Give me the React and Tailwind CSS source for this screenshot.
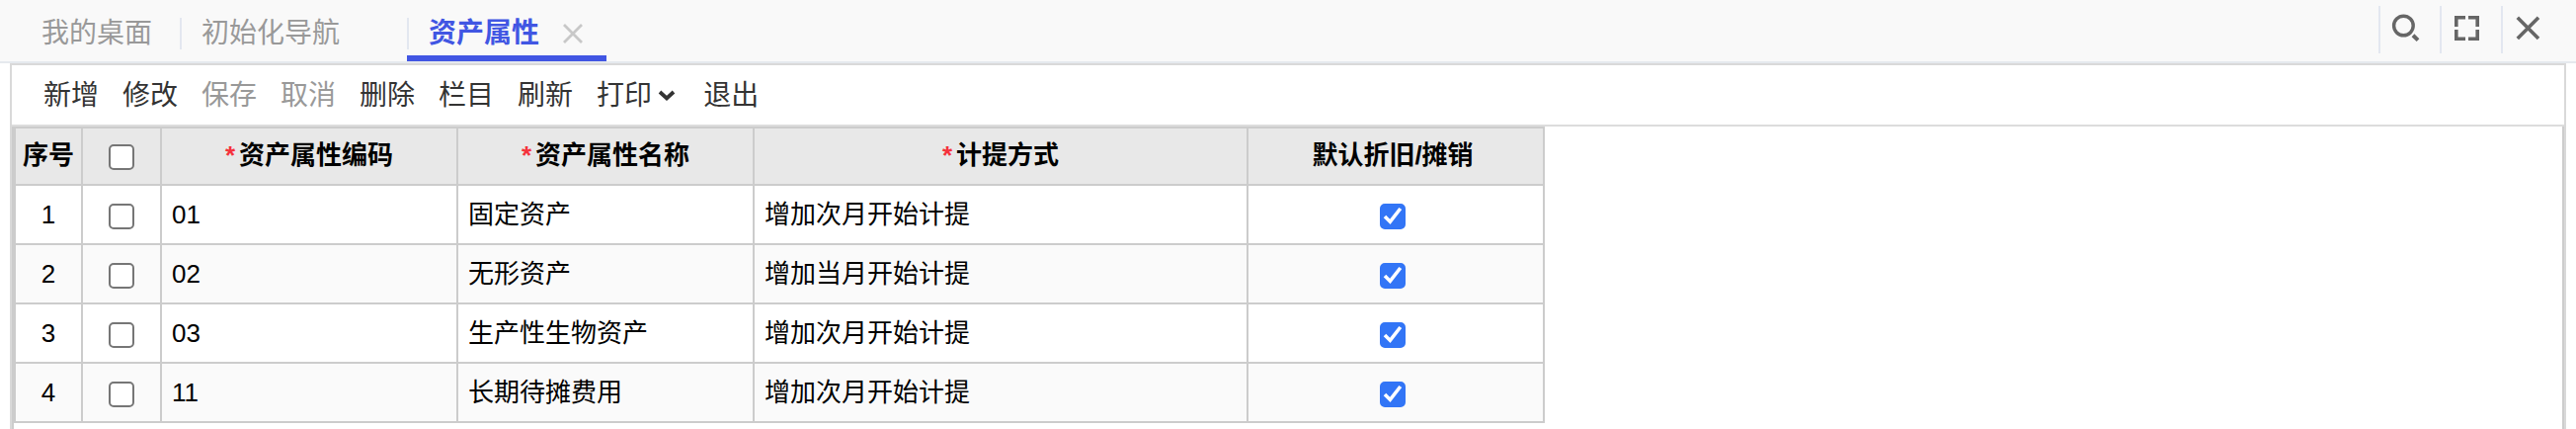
import { useState } from 'react';
import clsx from 'clsx';

const TABS = [
  { id: 'desktop', label: '我的桌面', pinned: true },
  { id: 'init', label: '初始化导航' },
  { id: 'asset', label: '资产属性' },
];

const ACTIONS = [
  { label: '新增' },
  { label: '修改' },
  { label: '保存', disabled: true },
  { label: '取消', disabled: true },
  { label: '删除' },
  { label: '栏目' },
  { label: '刷新' },
  { label: '打印', menu: true },
  { label: '退出' },
];

const COLUMNS = [
  { label: '资产属性编码', required: true },
  { label: '资产属性名称', required: true },
  { label: '计提方式', required: true },
  { label: '默认折旧/摊销', check: true },
];

const ROWS = [
  { code: '01', name: '固定资产', method: '增加次月开始计提' },
  { code: '02', name: '无形资产', method: '增加当月开始计提' },
  { code: '03', name: '生产性生物资产', method: '增加次月开始计提' },
  { code: '11', name: '长期待摊费用', method: '增加次月开始计提' },
];

function Checkbox({ label, defaultChecked }) {
  return (
    <label className="inline-grid align-middle">
      <input
        type="checkbox"
        aria-label={label}
        defaultChecked={defaultChecked}
        className="peer col-start-1 row-start-1 size-[26px] appearance-none rounded-[5px] border-2 border-[#767676] bg-white checked:border-[#3275f6] checked:bg-[#3275f6]"
      />
      <svg
        viewBox="0 0 26 26"
        className="pointer-events-none invisible col-start-1 row-start-1 size-[26px] peer-checked:visible"
        fill="none"
        stroke="white"
        strokeWidth="3.6"
      >
        <path d="M5 13 L10.4 18.4 L20.8 5" />
      </svg>
    </label>
  );
}

function Tab({ tab, active, onSelect }) {
  return (
    <div
      className={clsx(
        'flex h-[62px] items-center border-b-[6px] pt-3',
        active ? 'border-[#4156e3]' : 'border-transparent',
        tab.pinned ? 'pr-7 pl-[42px]' : 'pr-6',
      )}
    >
      {!tab.pinned && <span className="mr-5 h-8 w-0.5 bg-[#e3e7f0]" />}
      <button
        type="button"
        onClick={onSelect}
        className={clsx('leading-8', active ? 'font-bold text-[#4156e3]' : 'text-[#999]')}
      >
        {tab.label}
      </button>
      {!tab.pinned && (
        <button type="button" aria-label={`关闭${tab.label}`} className={clsx('ml-6', !active && 'invisible')}>
          <svg viewBox="0 0 20 20" className="size-5" fill="none" stroke="#c8c8c8" strokeWidth="2.8">
            <path d="M1 1 L19 19 M19 1 L1 19" />
          </svg>
        </button>
      )}
    </div>
  );
}

function WindowButton({ label, children }) {
  return (
    <button type="button" aria-label={label} className="flex h-12 w-[62px] items-center border-l-2 border-[#e3e7f0] pl-3">
      <svg viewBox="0 0 28 28" className="size-7 overflow-visible" fill="none" stroke="#666">
        {children}
      </svg>
    </button>
  );
}

export default function App() {
  const [activeTab, setActiveTab] = useState('asset');

  return (
    <div className="flex min-h-screen flex-col bg-white font-['Liberation_Sans','Noto_Sans_CJK_SC',sans-serif] text-[28px] text-[#333]">
      {/* Tab bar */}
      <header className="flex justify-between border-b-2 border-[#e5e9ee] bg-[#f9f9f9]">
        <nav className="flex">
          {TABS.map((tab) => (
            <Tab key={tab.id} tab={tab} active={tab.id === activeTab} onSelect={() => setActiveTab(tab.id)} />
          ))}
        </nav>
        <div className="flex pt-1.5 pr-[14px]">
          <WindowButton label="搜索">
            <circle cx="11.4" cy="10" r="9.8" strokeWidth="3.4" />
            <path d="M21 19.8 L26 24.6" strokeWidth="4" />
          </WindowButton>
          <WindowButton label="全屏">
            <path
              d="M2.8 11 V1.8 H12 M15 1.8 H24.2 V11 M24.2 14 V23.2 H15 M12 23.2 H2.8 V14"
              strokeWidth="3.6"
            />
          </WindowButton>
          <WindowButton label="关闭">
            <path d="M2.8 1.8 L24 23 M24 1.8 L2.8 23" strokeWidth="3.6" />
          </WindowButton>
        </div>
      </header>

      <main className="mx-[10px] flex flex-1 flex-col border-x-2 border-t-2 border-[#d9d9d9]">
        {/* Toolbar */}
        <div className="flex h-[62px] items-center gap-6 border-b-2 border-[#dcdcdc] pt-0.5 pl-8">
          {ACTIONS.map((action) => (
            <button
              key={action.label}
              type="button"
              disabled={action.disabled}
              className="flex items-center disabled:text-[#999]"
            >
              {action.label}
              {action.menu && (
                <svg viewBox="0 0 18 12" className="mr-1 ml-1.5 h-3 w-[18px]" fill="none" stroke="#333" strokeWidth="3.8">
                  <path d="M2 2 L9 8.5 L16 2" />
                </svg>
              )}
            </button>
          ))}
        </div>

        <div className="flex-1 border-x-2 border-[#ccc]">
          <table className="w-[1550px] table-fixed border-separate border-spacing-0 border-t-2 border-l-2 border-[#ccc] text-[26px] text-black">
            <colgroup>
              <col className="w-[68px]" />
              <col className="w-20" />
              <col className="w-[300px]" />
              <col className="w-[300px]" />
              <col className="w-[500px]" />
              <col className="w-[300px]" />
            </colgroup>
            <thead>
              <tr className="h-[58px] bg-[#e8e8e8] leading-8 *:border-r-2 *:border-b-2 *:border-[#ccc] *:pb-0.5">
                <th className="whitespace-nowrap">序号</th>
                <th>
                  <Checkbox label="全选" />
                </th>
                {COLUMNS.map((col) => (
                  <th key={col.label} className={clsx(col.check && 'pr-1.5')}>
                    {col.required && <span className="mr-1 text-[#f5323c]">*</span>}
                    {col.label}
                  </th>
                ))}
              </tr>
            </thead>
            <tbody>
              {ROWS.map((row, i) => (
                <tr
                  key={row.code}
                  className="h-[60px] leading-8 even:bg-[#fafafa] *:border-r-2 *:border-b-2 *:border-[#ccc]"
                >
                  <td className="text-center">{i + 1}</td>
                  <td className="text-center">
                    <Checkbox label={`选择${row.name}`} />
                  </td>
                  <td className="px-[10px]">{row.code}</td>
                  <td className="px-[10px]">{row.name}</td>
                  <td className="px-[10px]">{row.method}</td>
                  <td className="pr-1.5 text-center">
                    <Checkbox label={`${row.name}默认折旧/摊销`} defaultChecked />
                  </td>
                </tr>
              ))}
            </tbody>
          </table>
        </div>
      </main>
    </div>
  );
}
